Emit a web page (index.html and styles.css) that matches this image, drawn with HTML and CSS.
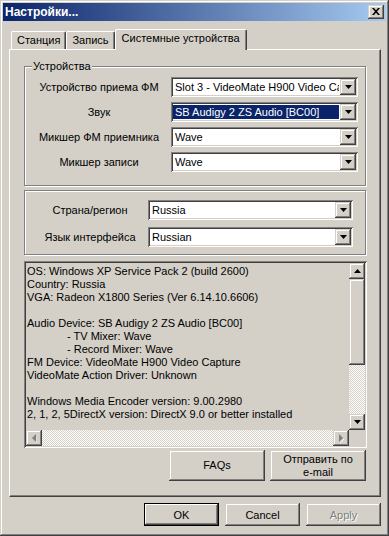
FILE: index.html
```html
<!DOCTYPE html>
<html lang="ru">
<head>
  <meta charset="UTF-8">
  <title>Настройки...</title>
  <link rel="stylesheet" href="styles.css">
</head>
<body>
  <div class="window">
    <div class="titlebar">
      <span class="title">Настройки...</span>
      <div class="close">
        <svg width="8" height="7" viewBox="0 0 8 7"><path d="M0 0h2l2 2.2L6 0h2L5 3.5 8 7H6L4 4.8 2 7H0l3-3.5z"/></svg>
      </div>
    </div>

    <div class="tabs">
      <div class="tab">Станция</div>
      <div class="tab">Запись</div>
      <div class="tab active">Системные устройства</div>
    </div>

    <div class="panel">
      <fieldset class="group">
        <legend>Устройства</legend>
        <div class="row">
          <label>Устройство приема ФМ</label>
          <div class="combo"><span class="combo-value">Slot 3 - VideoMate H900 Video Capture</span><span class="combo-btn"><svg width="7" height="4"><path d="M0 0h7L3.5 4z"/></svg></span></div>
        </div>
        <div class="row">
          <label>Звук</label>
          <div class="combo"><span class="combo-value selected">SB Audigy 2 ZS Audio [BC00]</span><span class="combo-btn"><svg width="7" height="4"><path d="M0 0h7L3.5 4z"/></svg></span></div>
        </div>
        <div class="row">
          <label>Микшер ФМ приемника</label>
          <div class="combo"><span class="combo-value">Wave</span><span class="combo-btn"><svg width="7" height="4"><path d="M0 0h7L3.5 4z"/></svg></span></div>
        </div>
        <div class="row">
          <label>Микшер записи</label>
          <div class="combo"><span class="combo-value">Wave</span><span class="combo-btn"><svg width="7" height="4"><path d="M0 0h7L3.5 4z"/></svg></span></div>
        </div>
      </fieldset>

      <div class="group group-region">
        <div class="row">
          <label>Страна/регион</label>
          <div class="combo"><span class="combo-value">Russia</span><span class="combo-btn"><svg width="7" height="4"><path d="M0 0h7L3.5 4z"/></svg></span></div>
        </div>
        <div class="row">
          <label>Язык интерфейса</label>
          <div class="combo"><span class="combo-value">Russian</span><span class="combo-btn"><svg width="7" height="4"><path d="M0 0h7L3.5 4z"/></svg></span></div>
        </div>
      </div>

      <div class="info">
        <div class="info-text">
          <div>OS: Windows XP Service Pack 2 (build 2600)</div>
          <div>Country: Russia</div>
          <div>VGA: Radeon X1800 Series (Ver 6.14.10.6606)</div>
          <div class="blank"></div>
          <div>Audio Device: SB Audigy 2 ZS Audio [BC00]</div>
          <div class="indent">- TV Mixer: Wave</div>
          <div class="indent">- Record Mixer: Wave</div>
          <div>FM Device: VideoMate H900 Video Capture</div>
          <div>VideoMate Action Driver: Unknown</div>
          <div class="blank"></div>
          <div>Windows Media Encoder version: 9.00.2980</div>
          <div>2, 1, 2, 5DirectX version: DirectX 9.0 or better installed</div>
        </div>
        <div class="vscroll">
          <span class="sb-btn"><svg width="7" height="4"><path d="M3.5 0L7 4H0z"/></svg></span>
          <span class="sb-thumb"></span>
          <span class="sb-track"></span>
          <span class="sb-btn"><svg width="7" height="4"><path d="M0 0h7L3.5 4z"/></svg></span>
        </div>
        <div class="hscroll">
          <span class="sb-btn disabled"><svg width="5" height="9"><path d="M4 0v8L0 4z" fill="#808080"/><path d="M5 1v8L4.5 8.5z" fill="#fff"/></svg></span>
          <span class="sb-track"></span>
          <span class="sb-btn disabled"><svg width="5" height="9"><path d="M0 0v8l4-4z" fill="#808080"/><path d="M1 8.5L5 4.5v1L1 9.5z" fill="#fff"/></svg></span>
        </div>
        <div class="corner"></div>
      </div>

      <div class="panel-actions">
        <button class="btn btn-tall">FAQs</button>
        <button class="btn btn-tall">Отправить по<br>e-mail</button>
      </div>
    </div>

    <div class="dialog-actions">
      <button class="btn btn-default">OK</button>
      <button class="btn">Cancel</button>
      <button class="btn disabled">Apply</button>
    </div>
  </div>
</body>
</html>
```

FILE: styles.css
```css
:root {
  --face: #d4d0c8;
  --light: #ffffff;
  --shadow: #808080;
  --dark: #404040;
  --navy: #0a246a;
  --raised: inset -1px -1px var(--dark), inset 1px 1px var(--face), inset -2px -2px var(--shadow), inset 2px 2px var(--light);
  --sunken: inset 1px 1px var(--shadow), inset -1px -1px var(--light), inset 2px 2px var(--dark), inset -2px -2px var(--face);
}

* {
  margin: 0;
  padding: 0;
  box-sizing: border-box;
}

body {
  background: var(--face);
  font-family: "Liberation Sans", Arial, sans-serif;
  font-size: 11px;
  color: #000;
}

.window {
  width: 389px;
  height: 536px;
  padding: 3px;
  background: var(--face);
  box-shadow: inset -1px -1px var(--dark), inset 1px 1px var(--face), inset -2px -2px var(--shadow), inset 2px 2px var(--light);
  display: flex;
  flex-direction: column;
}

.titlebar {
  height: 18px;
  padding: 0 2px;
  display: flex;
  align-items: center;
  justify-content: space-between;
  background: linear-gradient(to right, var(--navy), #a6caf0);
}

.title {
  color: #fff;
  font-weight: bold;
  font-size: 12px;
}

.close {
  width: 16px;
  height: 14px;
  background: var(--face);
  box-shadow: var(--raised);
  display: flex;
  align-items: center;
  justify-content: center;
  padding-bottom: 1px;
}

/* tabs */
.tabs {
  display: flex;
  align-items: flex-end;
  height: 20px;
  margin: 8px 0 0 8px;
}

.tab {
  height: 18px;
  padding: 0 5px;
  line-height: 17px;
  border-top: 1px solid var(--light);
  border-left: 1px solid var(--light);
  border-right: 1px solid var(--dark);
  box-shadow: inset -1px 0 var(--shadow);
  border-radius: 2px 2px 0 0;
}

.tab.active {
  height: 21px;
  margin-bottom: -1px;
  padding: 0 6px;
  line-height: 16px;
  background: var(--face);
  position: relative;
  z-index: 1;
}

.panel {
  width: 372px;
  height: 448px;
  margin-left: 6px;
  padding: 9px 13px 0 14px;
  border-top: 1px solid var(--light);
  border-left: 1px solid var(--light);
  border-right: 1px solid var(--dark);
  border-bottom: 1px solid var(--dark);
  box-shadow: inset -1px -1px var(--shadow);
  display: flex;
  flex-direction: column;
}

/* group boxes */
.group {
  width: 342px;
  border: 1px solid var(--shadow);
  box-shadow: inset 1px 1px var(--light), 1px 1px var(--light);
  display: flex;
  flex-direction: column;
  gap: 5px;
  padding: 4px 0 13px;
}

.group legend {
  margin-left: 7px;
  padding: 0 1px;
  line-height: 14px;
  background: var(--face);
}

.group-region {
  margin-top: 4px;
  padding: 9px 0 7px;
  gap: 7px;
}

.row {
  display: flex;
  align-items: center;
  height: 20px;
}

.row label {
  width: 136px;
  margin-left: 6px;
  margin-right: 4px;
  text-align: center;
  white-space: nowrap;
}

.group-region .row label {
  width: 100px;
  margin-left: 15px;
  margin-right: 8px;
}

.combo {
  width: 187px;
  height: 20px;
  padding: 2px;
  display: flex;
  background: #fff;
  box-shadow: var(--sunken);
}

.group-region .combo {
  width: 205px;
}

.combo-value {
  flex: 1;
  min-width: 0;
  padding-left: 2px;
  margin-right: 1px;
  line-height: 16px;
  white-space: nowrap;
  overflow: hidden;
}

.combo-value.selected {
  background: var(--navy);
  color: #fff;
  margin: 1px 1px 1px 0;
  line-height: 14px;
}

.combo-btn {
  width: 16px;
  height: 16px;
  background: var(--face);
  box-shadow: var(--raised);
  display: flex;
  align-items: center;
  justify-content: center;
}

/* info box with scrollbars */
.info {
  margin-top: 6px;
  width: 343px;
  height: 187px;
  padding: 2px;
  box-shadow: var(--sunken);
  display: grid;
  grid-template-columns: 1fr 16px;
  grid-template-rows: 1fr 16px;
}

.info-text {
  padding: 2px 0 0 1px;
  line-height: 13px;
  white-space: nowrap;
  overflow: hidden;
}

.info-text .blank {
  height: 13px;
}

.info-text .indent {
  padding-left: 40px;
}

.vscroll {
  display: flex;
  flex-direction: column;
}

.hscroll {
  display: flex;
}

.sb-btn {
  width: 16px;
  height: 16px;
  flex: none;
  background: var(--face);
  box-shadow: var(--raised);
  display: flex;
  align-items: center;
  justify-content: center;
}

.sb-thumb {
  height: 86px;
  flex: none;
  background: var(--face);
  box-shadow: var(--raised);
}

.sb-track {
  flex: 1;
  background: repeating-conic-gradient(#fff 0 25%, var(--face) 0 50%) 0 0 / 2px 2px;
}

.corner {
  background: var(--face);
}

/* buttons */
.btn {
  width: 75px;
  height: 23px;
  border: none;
  background: var(--face);
  font: inherit;
  color: #000;
  box-shadow: var(--raised);
}

.btn-default {
  box-shadow: inset 0 0 0 1px #000, inset -2px -2px var(--dark), inset 2px 2px var(--light), inset -3px -3px var(--shadow);
}

.btn.disabled {
  color: var(--shadow);
  text-shadow: 1px 1px #fff;
}

.btn-tall {
  width: 96px;
  height: 31px;
  line-height: 13px;
}

.panel-actions {
  display: flex;
  justify-content: flex-end;
  gap: 5px;
  margin-top: 2px;
  padding-right: 1px;
}

.dialog-actions {
  display: flex;
  justify-content: flex-end;
  gap: 6px;
  margin-top: 6px;
  padding-right: 5px;
}
```
